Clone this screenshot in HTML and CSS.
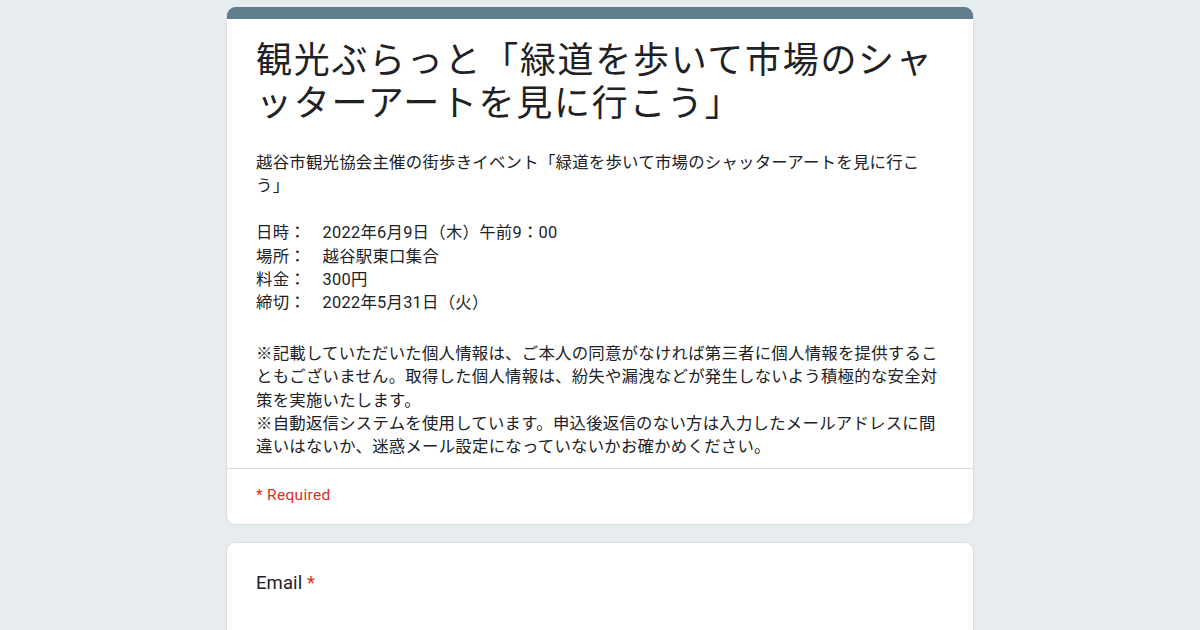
FILE: index.html
```html
<!DOCTYPE html>
<html lang="ja">
<head>
<meta charset="utf-8">
<title>観光ぶらっと</title>
<link rel="stylesheet" href="styles.css">
</head>
<body>
<div class="page">
  <div class="card header-card">
    <div class="accent"></div>
    <div class="header-body">
      <h1 class="title">観光ぶらっと「緑道を歩いて市場のシャッターアートを見に行こう」</h1>
      <div class="desc">
        <p class="para">越谷市観光協会主催の街歩きイベント「緑道を歩いて市場のシャッターアートを見に行こう」</p>
        <p class="para gap1">日時：　2022年6月9日（木）午前9：00<br>場所：　越谷駅東口集合<br>料金：　300円<br>締切：　2022年5月31日（火）</p>
        <p class="para gap2">※記載していただいた個人情報は、ご本人の同意がなければ第三者に個人情報を提供することもございません。取得した個人情報は、紛失や漏洩などが発生しないよう積極的な安全対策を実施いたします。<br>※自動返信システムを使用しています。申込後返信のない方は入力したメールアドレスに間違いはないか、迷惑メール設定になっていないかお確かめください。</p>
      </div>
    </div>
    <div class="required-row">* Required</div>
  </div>
  <div class="card question-card">
    <div class="q-title">Email <span class="star">*</span></div>
  </div>
</div>
</body>
</html>
```

FILE: styles.css
```css
* { box-sizing: border-box; }
html, body { margin: 0; padding: 0; }
body {
  background: #e7ecef;
  font-family: Roboto, "Noto Sans CJK JP", sans-serif;
  color: #202124;
  height: 630px;
  overflow: hidden;
}
.page {
  width: 748px;
  margin: 0 auto;
  padding-top: 7px;
  display: flex;
  flex-direction: column;
  gap: 17px;
}
.card {
  background: #fff;
  border: 1px solid #dadce0;
  border-radius: 9px;
  overflow: hidden;
}
.header-card { border-top: none; }
.accent {
  height: 12px;
  background: #5f7d8b;
}
.header-body {
  padding: 21px 29px 10px 29px;
}
.title {
  margin: 0;
  font-family: Roboto, "Noto Sans CJK JP", sans-serif;
  font-weight: 400;
  font-size: 36px;
  line-height: 43px;
  letter-spacing: 1.7px;
  color: #202124;
}
.desc {
  margin-top: 25px;
  font-size: 16.4px;
  line-height: 23.2px;
  letter-spacing: 0.25px;
  color: #202124;
}
.para { margin: 0; }
.gap1 { margin-top: 24px; }
.gap2 { margin-top: 28px; }
.required-row {
  border-top: 1px solid #dadce0;
  padding: 15px 29px 18px;
  font-size: 15.5px;
  line-height: 22px;
  color: #d93025;
  letter-spacing: 0.3px;
}
.question-card {
  padding: 27px 29px 40px;
  height: 120px;
}
.q-title {
  font-size: 18.5px;
  line-height: 26px;
  letter-spacing: 0.1px;
  color: #202124;
}
.star { color: #d93025; }
```
